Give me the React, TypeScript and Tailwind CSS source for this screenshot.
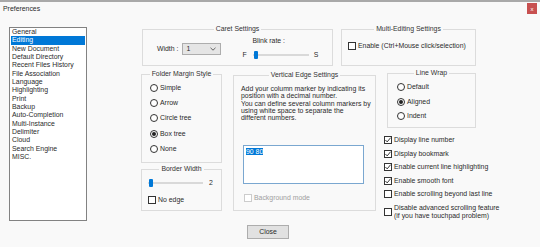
import type { ReactNode } from 'react'

const pages = ['General', 'Editing', 'New Document', 'Default Directory', 'Recent Files History', 'File Association', 'Language', 'Highlighting', 'Print', 'Backup', 'Auto-Completion', 'Multi-Instance', 'Delimiter', 'Cloud', 'Search Engine', 'MISC.']

function Group({ title, className, children }: { title: string; className?: string; children?: ReactNode }) {
  return (
    <fieldset className={`border border-[#dcdcdc] min-w-0 ${className ?? ''}`}>
      <legend className="mx-auto px-[2px] leading-[8px] text-[#333]">{title}</legend>
      {children}
    </fieldset>
  )
}

function Check({ checked, disabled }: { checked?: boolean; disabled?: boolean }) {
  return (
    <span className={`w-[8px] h-[8px] border bg-white flex items-center justify-center shrink-0 ${disabled ? 'border-[#cccccc]' : 'border-[#333]'}`}>
      {checked && (
        <svg width="6" height="6" viewBox="0 0 6 6">
          <path d="M0.4 3 L2.2 4.9 L5.6 0.7" fill="none" stroke="#222" strokeWidth="0.9" />
        </svg>
      )}
    </span>
  )
}

function Radio({ checked }: { checked?: boolean }) {
  return (
    <span className="w-[8px] h-[8px] rounded-full border border-[#333] bg-white flex items-center justify-center shrink-0">
      {checked && <span className="w-[4px] h-[4px] rounded-full bg-[#222]" />}
    </span>
  )
}

function Option({ label, checked, radio }: { label: string; checked?: boolean; radio?: boolean }) {
  return (
    <div className="flex items-center h-[8px] gap-[2px] whitespace-nowrap">
      {radio ? <Radio checked={checked} /> : <Check checked={checked} />}
      <span>{label}</span>
    </div>
  )
}

function Track({ width }: { width: string }) {
  return (
    <div className={`relative h-[8px] flex items-center ${width}`}>
      <div className="w-full h-[2px] bg-[#e7e7e7] border-y border-[#d9d9d9]" />
      <div className="absolute left-[1px] top-0 w-[4px] h-[8px] rounded-[1px] bg-[#0078d7]" />
    </div>
  )
}

export default function App() {
  return (
    <div className="w-[540px] h-[247px] overflow-hidden bg-[#f9f9f9] text-[6.9px] leading-[8px] text-[#2a2a2a] font-['Liberation_Sans',Arial,sans-serif] flex flex-col">
      <div className="h-[2px] bg-[#a9a9a9]" />
      <div className="h-[13px] flex items-center justify-between pl-[3px] pr-[3px]">
        <span>Preferences</span>
        <span className="w-[10px] h-[11px] bg-[#c75050] text-white flex items-center justify-center text-[6px]">x</span>
      </div>

      <div className="mt-[10px] h-[196px] flex items-start">
        <div className="ml-[9px] mt-[2px] w-[78px] h-[194px] border border-[#828282] bg-white">
          {pages.map((p) => (
            <div key={p} className={`h-[8.33px] leading-[8.33px] mx-[1px] pl-[1px] whitespace-nowrap ${p === 'Editing' ? 'bg-[#0078d7] text-white' : ''}`}>
              {p}
            </div>
          ))}
        </div>

        <div className="ml-[54px] flex flex-col">
          <div className="flex items-start">
            <Group title="Caret Settings" className="ml-[1px] w-[191px] h-[41px]">
              <div className="flex items-start pl-[14px]">
                <div className="flex items-center mt-[10px]">
                  <span>Width :</span>
                  <div className="ml-[4px] w-[39px] h-[12px] bg-[#e5e5e5] border border-[#adadad] flex items-center justify-between pl-[3px] pr-[4px]">
                    <span>1</span>
                    <svg width="6" height="4" viewBox="0 0 6 4">
                      <path d="M0.5 0.8 L3 3.2 L5.5 0.8" fill="none" stroke="#444" strokeWidth="0.8" />
                    </svg>
                  </div>
                </div>
                <div className="ml-[21px] flex flex-col mt-[4px]">
                  <span className="ml-[10px]">Blink rate :</span>
                  <div className="mt-[6px] flex items-center">
                    <span>F</span>
                    <Track width="ml-[6px] w-[56px]" />
                    <span className="ml-[5px]">S</span>
                  </div>
                </div>
              </div>
            </Group>
            <Group title="Multi-Editing Settings" className="ml-[8px] w-[135px] h-[41px]">
              <div className="mt-[9px] pl-[6px]">
                <Option label="Enable (Ctrl+Mouse click/selection)" />
              </div>
            </Group>
          </div>

          <div className="flex items-start">
            <div className="flex flex-col">
              <Group title="Folder Margin Style" className="mt-[4px] w-[81px] h-[93px]">
                <div className="mt-[6px] pl-[8px] flex flex-col gap-[7.2px]">
                  <Option radio label="Simple" />
                  <Option radio label="Arrow" />
                  <Option radio label="Circle tree" />
                  <Option radio checked label="Box tree" />
                  <Option radio label="None" />
                </div>
              </Group>
              <Group title="Border Width" className="mt-[2px] w-[81px] h-[46px]">
                <div className="mt-[6px] pl-[6px] flex items-center">
                  <Track width="w-[55px]" />
                  <span className="ml-[6px]">2</span>
                </div>
                <div className="mt-[9px] pl-[6px]">
                  <Option label="No edge" />
                </div>
              </Group>
            </div>

            <Group title="Vertical Edge Settings" className="mt-[5px] ml-[11px] w-[143px] h-[140px]">
              <p className="mt-[6px] pl-[7px] leading-[7.3px] whitespace-nowrap">
                Add your column marker by indicating its<br />
                position with a decimal number.<br />
                You can define several column markers by<br />
                using white space to separate the<br />
                different numbers.
              </p>
              <div className="mt-[23.5px] ml-[9px] w-[121px] h-[39px] bg-white border border-[#7aa7d0] pl-[2px] pt-[2px]">
                <span className="bg-[#0078d7] text-white">90 80</span>
              </div>
              <div className="mt-[10px] ml-[10px] flex items-center gap-[2px] text-[#a0a0a0]">
                <Check disabled />
                <span>Background mode</span>
              </div>
            </Group>

            <div className="ml-[8px] flex flex-col">
              <Group title="Line Wrap" className="mt-[3px] ml-[3px] w-[89px] h-[59px]">
                <div className="mt-[6px] pl-[9px] flex flex-col gap-[6.5px]">
                  <Option radio label="Default" />
                  <Option radio checked label="Aligned" />
                  <Option radio label="Indent" />
                </div>
              </Group>
              <div className="mt-[8px] flex flex-col gap-[5.5px]">
                <Option checked label="Display line number" />
                <Option checked label="Display bookmark" />
                <Option checked label="Enable current line highlighting" />
                <Option checked label="Enable smooth font" />
                <Option label="Enable scrolling beyond last line" />
                <div className="flex items-center gap-[2px] whitespace-nowrap">
                  <Check />
                  <span className="leading-[8.5px]">
                    Disable advanced scrolling feature<br />
                    (if you have touchpad problem)
                  </span>
                </div>
              </div>
            </div>
          </div>
        </div>
      </div>

      <button className="mt-[4px] ml-[247px] w-[42px] h-[14px] bg-[#e1e1e1] border border-[#adadad] flex items-center justify-center">
        Close
      </button>
    </div>
  )
}
